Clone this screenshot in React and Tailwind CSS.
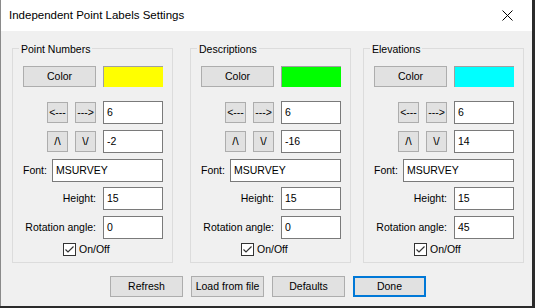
const groups = [
  { title: 'Point Numbers', swatch: 'bg-[#ffff00]', dx: '6', dy: '-2', rot: '0', ml: 'ml-[11px]' },
  { title: 'Descriptions', swatch: 'bg-[#00ff00]', dx: '6', dy: '-16', rot: '0', ml: 'ml-[17px]' },
  { title: 'Elevations', swatch: 'bg-[#00ffff]', dx: '6', dy: '14', rot: '45', ml: 'ml-[12px]' },
]

function Btn({ children, className = '', border = 'border border-[#adadad]' }) {
  return (
    <button
      type="button"
      className={`flex items-center justify-center bg-[#e1e1e1] text-black leading-none ${border} ${className}`}
    >
      {children}
    </button>
  )
}

function Field({ value, className = 'w-[60px]' }) {
  return (
    <div className={`h-[23px] bg-white border border-[#7a7a7a] pl-[3px] pt-[3px] leading-[14px] ${className}`}>
      {value}
    </div>
  )
}

function Group({ g }) {
  return (
    <div className={`relative w-[161px] h-[215px] border border-[#dcdcdc] pl-[10px] pr-[9px] pt-[17px] ${g.ml}`}>
      <span className="absolute left-[6px] top-[-7px] bg-[#f0f0f0] px-[2px] leading-[14px]">{g.title}</span>

      <div className="flex justify-between">
        <Btn className="w-[73px] h-[21px]">Color</Btn>
        <div className={`w-[60px] h-[21px] border-l border-t border-l-[#a0a0a0] border-t-[#a0a0a0] ${g.swatch}`} />
      </div>

      <div className="flex items-center justify-end gap-[7px] mt-[14px]">
        <Btn className="w-[21px] h-[21px]">&lt;---</Btn>
        <Btn className="w-[21px] h-[21px]">---&gt;</Btn>
        <Field value={g.dx} />
      </div>

      <div className="flex items-center justify-end gap-[7px] mt-[6px]">
        <Btn className="w-[21px] h-[21px] text-[11.5px]">/\</Btn>
        <Btn className="w-[21px] h-[21px] text-[11.5px]">\/</Btn>
        <Field value={g.dy} />
      </div>

      <div className="flex items-center justify-between mt-[6px]">
        <span>Font:</span>
        <Field value="MSURVEY" className="w-[111px]" />
      </div>

      <div className="flex items-center justify-end gap-[7px] mt-[5px]">
        <span>Height:</span>
        <Field value="15" />
      </div>

      <div className="flex items-center justify-end gap-[7px] mt-[6px]">
        <span>Rotation angle:</span>
        <Field value={g.rot} />
      </div>

      <div className="flex items-center mt-[4px] pl-[40px]">
        <div className="w-[13px] h-[13px] bg-white border border-[#333333] flex items-center justify-center">
          <svg width="11" height="11" viewBox="0 0 11 11">
            <path d="M1.5 5.5 L4 8 L9.5 2.5" fill="none" stroke="#333333" strokeWidth="1.2" />
          </svg>
        </div>
        <span className="ml-[3px] leading-[13px]">On/Off</span>
      </div>
    </div>
  )
}

export default function App() {
  return (
    <div className="w-[535px] h-[308px] bg-[#2b2b2b] font-['Liberation_Sans',Arial,sans-serif] text-[10.5px] text-black">
      <div className="w-[532px] h-[306px] bg-[#f0f0f0] border-l border-[#8a8a8a] flex flex-col">
        <div className="h-[31px] bg-white flex items-center justify-between pl-[8px] pr-[19px]">
          <span className="text-[11.5px] text-black">Independent Point Labels Settings</span>
          <svg width="11" height="11" viewBox="0 0 11 11">
            <path d="M0.5 0.5 L10.5 10.5 M10.5 0.5 L0.5 10.5" stroke="#000000" strokeWidth="1" />
          </svg>
        </div>

        <div className="flex items-start mt-[17px]">
          {groups.map((g) => (
            <Group key={g.title} g={g} />
          ))}
        </div>

        <div className="flex gap-[8px] mt-[13px] ml-[109px]">
          <Btn className="w-[73px] h-[21px]">Refresh</Btn>
          <Btn className="w-[73px] h-[21px]">Load from file</Btn>
          <Btn className="w-[73px] h-[21px]">Defaults</Btn>
          <Btn className="w-[73px] h-[21px]" border="border-2 border-[#0078d7]">Done</Btn>
        </div>
      </div>
    </div>
  )
}
